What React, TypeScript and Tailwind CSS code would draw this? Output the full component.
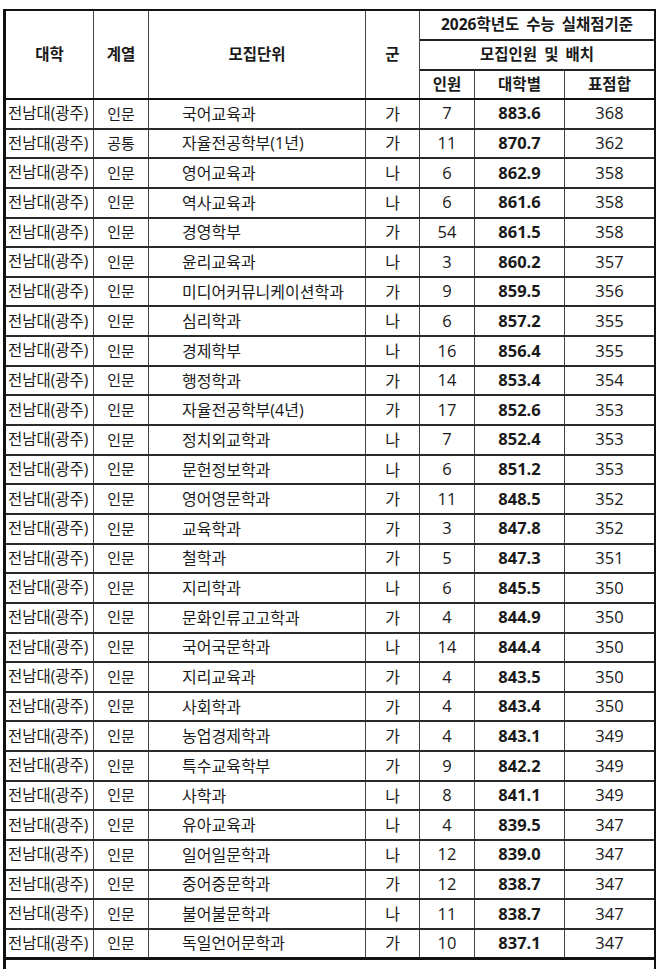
import React from 'react';

const rows: [string, string, string, string, number, string, number][] = [
    ['전남대(광주)', '인문', '국어교육과', '가', 7, '883.6', 368],
    ['전남대(광주)', '공통', '자율전공학부(1년)', '가', 11, '870.7', 362],
    ['전남대(광주)', '인문', '영어교육과', '나', 6, '862.9', 358],
    ['전남대(광주)', '인문', '역사교육과', '나', 6, '861.6', 358],
    ['전남대(광주)', '인문', '경영학부', '가', 54, '861.5', 358],
    ['전남대(광주)', '인문', '윤리교육과', '나', 3, '860.2', 357],
    ['전남대(광주)', '인문', '미디어커뮤니케이션학과', '가', 9, '859.5', 356],
    ['전남대(광주)', '인문', '심리학과', '나', 6, '857.2', 355],
    ['전남대(광주)', '인문', '경제학부', '나', 16, '856.4', 355],
    ['전남대(광주)', '인문', '행정학과', '가', 14, '853.4', 354],
    ['전남대(광주)', '인문', '자율전공학부(4년)', '가', 17, '852.6', 353],
    ['전남대(광주)', '인문', '정치외교학과', '나', 7, '852.4', 353],
    ['전남대(광주)', '인문', '문헌정보학과', '나', 6, '851.2', 353],
    ['전남대(광주)', '인문', '영어영문학과', '가', 11, '848.5', 352],
    ['전남대(광주)', '인문', '교육학과', '가', 3, '847.8', 352],
    ['전남대(광주)', '인문', '철학과', '가', 5, '847.3', 351],
    ['전남대(광주)', '인문', '지리학과', '나', 6, '845.5', 350],
    ['전남대(광주)', '인문', '문화인류고고학과', '가', 4, '844.9', 350],
    ['전남대(광주)', '인문', '국어국문학과', '나', 14, '844.4', 350],
    ['전남대(광주)', '인문', '지리교육과', '가', 4, '843.5', 350],
    ['전남대(광주)', '인문', '사회학과', '가', 4, '843.4', 350],
    ['전남대(광주)', '인문', '농업경제학과', '가', 4, '843.1', 349],
    ['전남대(광주)', '인문', '특수교육학부', '가', 9, '842.2', 349],
    ['전남대(광주)', '인문', '사학과', '나', 8, '841.1', 349],
    ['전남대(광주)', '인문', '유아교육과', '나', 4, '839.5', 347],
    ['전남대(광주)', '인문', '일어일문학과', '나', 12, '839.0', 347],
    ['전남대(광주)', '인문', '중어중문학과', '가', 12, '838.7', 347],
    ['전남대(광주)', '인문', '불어불문학과', '나', 11, '838.7', 347],
    ['전남대(광주)', '인문', '독일언어문학과', '가', 10, '837.1', 347],
];

const cols = 'grid grid-cols-[88px_55px_217px_54px_55px_90px_89px]';
const vline = 'border-r border-[#444]';
const th = 'flex items-center justify-center font-bold text-[15.5px]';
const head = `${th} border-b-2 border-[#222] [word-spacing:3px]`;

export default function App() {
    return (
        <div className="w-[658px] h-[969px] overflow-hidden bg-white text-[15px] text-[#1a1a1a] [font-family:'Open_Sans','Noto_Sans_CJK_KR',sans-serif]">
            <div className="ml-[3px] mt-[9px] w-[653px] border-l-[3px] border-t-2 border-r-2 border-[#111]">
                <div className={`${cols} grid-rows-[30px_30px_27px] border-b-2 border-[#111]`}>
                    <div className={`${vline} ${th} row-span-3`}>대학</div>
                    <div className={`${vline} ${th} row-span-3`}>계열</div>
                    <div className={`${vline} ${th} row-span-3`}>모집단위</div>
                    <div className={`${vline} ${th} row-span-3`}>군</div>
                    <div className={`${head} col-span-3`}>2026학년도 수능 실채점기준</div>
                    <div className={`${head} col-span-3`}>모집인원 및 배치</div>
                    <div className={`${vline} ${th}`}>인원</div>
                    <div className={`${vline} ${th}`}>대학별</div>
                    <div className={th}>표점합</div>
                </div>
                {rows.map((r, i) => (
                    <div
                        key={i}
                        className={`${cols} h-[29.65px] ${i === rows.length - 1 ? 'border-b-[3px] border-[#111]' : 'border-b-2 border-[#2a2a2a]'}`}
                    >
                        <div className={`${vline} flex items-center pl-[2px] whitespace-nowrap text-[15.5px]`}>{r[0]}</div>
                        <div className={`${vline} flex items-center justify-center`}>{r[1]}</div>
                        <div className={`${vline} flex items-center pl-[33px] whitespace-nowrap text-[16px]`}>{r[2]}</div>
                        <div className={`${vline} flex items-center justify-center text-[16px]`}>{r[3]}</div>
                        <div className={`${vline} flex items-center justify-center text-[16.5px]`}>{r[4]}</div>
                        <div className={`${vline} flex items-center justify-center font-bold text-[16.5px]`}>{r[5]}</div>
                        <div className="flex items-center justify-center text-[16.5px]">{r[6]}</div>
                    </div>
                ))}
                <div className="h-[30px]"></div>
            </div>
        </div>
    );
}
